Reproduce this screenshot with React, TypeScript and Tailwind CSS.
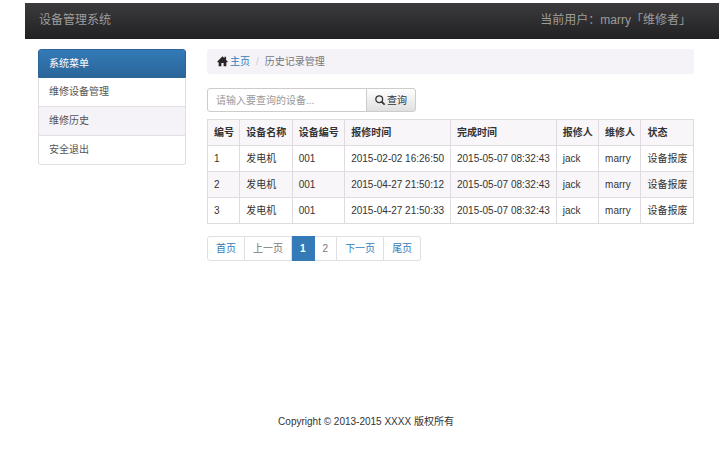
import clsx from 'clsx';

const menu = ['维修设备管理', '维修历史', '安全退出'];

const columns = ['编号', '设备名称', '设备编号', '报修时间', '完成时间', '报修人', '维修人', '状态'];

const records = [
  ['1', '发电机', '001', '2015-02-02 16:26:50', '2015-05-07 08:32:43', 'jack', 'marry', '设备报废'],
  ['2', '发电机', '001', '2015-04-27 21:50:12', '2015-05-07 08:32:43', 'jack', 'marry', '设备报废'],
  ['3', '发电机', '001', '2015-04-27 21:50:33', '2015-05-07 08:32:43', 'jack', 'marry', '设备报废'],
];

const pages = ['首页', '上一页', '1', '2', '下一页', '尾页'];

function HomeIcon() {
  return (
    <svg viewBox="0 0 20 20" className="h-[11px] w-[11px] fill-[#2b2528]" aria-hidden="true">
      <path d="M10 0.5 0.6 10.2c-.4.4-.2 1 .4 1H3V18.5h5v-6h4v6h5v-7.3h2c.6 0 .8-.6.4-1L16.5 7.2V1.5h-3V4.1z" />
    </svg>
  );
}

function SearchIcon() {
  return (
    <svg viewBox="0 0 20 20" className="h-[10px] w-[10px] fill-none stroke-[#333]" aria-hidden="true">
      <circle cx="8.4" cy="8.4" r="6.8" strokeWidth="2.6" />
      <path d="m13.6 13.6 4.6 4.6" strokeWidth="3.4" strokeLinecap="round" />
    </svg>
  );
}

function Sidebar() {
  return (
    <nav className="w-[148px] shrink-0 self-start">
      <a
        href="#"
        className="block rounded-t-[3px] border border-[#2b669a] bg-linear-to-b from-[#337ab7] to-[#2b669a] px-[10px] py-[6px] leading-[15px] text-white"
      >
        系统菜单
      </a>
      {menu.map((item) => (
        <a
          key={item}
          href="#"
          className="block border-x border-b border-[#e2dee4] px-[10px] py-[7px] leading-[14px] text-[#555] last:rounded-b-[3px] odd:bg-[#f5f3f7]"
        >
          {item}
        </a>
      ))}
    </nav>
  );
}

function RecordTable() {
  return (
    <table className="mt-[7px] w-full border-collapse text-left whitespace-nowrap">
      <thead>
        <tr className="bg-[#f8f6f9]">
          {columns.map((column) => (
            <th key={column} className="border border-[#e0dae1] py-[5px] pr-[5px] pl-[6px] font-bold">
              {column}
            </th>
          ))}
        </tr>
      </thead>
      <tbody>
        {records.map((record) => (
          <tr key={record[0]} className="even:bg-[#f8f6f9]">
            {record.map((value, i) => (
              <td key={columns[i]} className="border border-[#e0dae1] py-[5px] pr-[5px] pl-[6px]">
                {value}
              </td>
            ))}
          </tr>
        ))}
      </tbody>
    </table>
  );
}

function Pagination() {
  return (
    <nav className="mt-3 flex">
      {pages.map((page) => (
        <a
          key={page}
          href="#"
          className={clsx(
            'border-y border-r px-2 py-1 leading-[15px] first:rounded-l-[3px] first:border-l last:rounded-r-[3px]',
            page === '1' && 'border-[#337ab7] bg-[#337ab7] font-bold text-white',
            page !== '1' && 'border-[#e2dee4]',
            (page === '上一页' || page === '2') && 'text-[#777]',
            (page === '首页' || page === '下一页' || page === '尾页') && 'text-[#337ab7]',
          )}
        >
          {page}
        </a>
      ))}
    </nav>
  );
}

export default function App() {
  return (
    <div className="bg-white pt-[3px] pr-[7px] pb-5 pl-[25px] font-['Liberation_Sans','Noto_Sans_CJK_SC',sans-serif] text-[10px] leading-[15px] text-[#333]">
      <header className="flex items-center justify-between border-b border-[#1b1f26] bg-linear-to-b from-[#3c3a3c] to-[#222224] pr-[28px] pl-[14px] text-[12px] leading-[35px] text-[#9d9d9d]">
        <a href="#">设备管理系统</a>
        <p>当前用户：marry「维修者」</p>
      </header>

      <div className="pr-[25px] pl-[13px]">
        <div className="flex gap-[21px] pt-[10px]">
          <Sidebar />
          <main className="min-w-0 flex-1">
            <div className="flex items-center rounded-[3px] bg-[#f5f3f7] px-[10px] py-[5px] text-[#777]">
              <HomeIcon />
              <a href="#" className="ml-[2px] text-[#337ab7]">
                主页
              </a>
              <span className="px-[6px] text-[#ccc]">/</span>
              <span>历史记录管理</span>
            </div>

            <form className="mt-[14px] flex">
              <input
                type="text"
                aria-label="请输入要查询的设备"
                placeholder="请输入要查询的设备..."
                className="h-6 w-[160px] rounded-l-[3px] border border-[#ccc] px-2 placeholder:text-[#999]"
              />
              <button
                type="button"
                className="-ml-px flex h-6 items-center gap-[2px] rounded-r-[3px] border border-[#ccc] bg-linear-to-b from-white to-[#e0e0e0] px-2"
              >
                <SearchIcon />
                查询
              </button>
            </form>

            <RecordTable />
            <Pagination />
          </main>
        </div>

        <footer className="mt-[153px] text-center">Copyright © 2013-2015 XXXX 版权所有</footer>
      </div>
    </div>
  );
}
